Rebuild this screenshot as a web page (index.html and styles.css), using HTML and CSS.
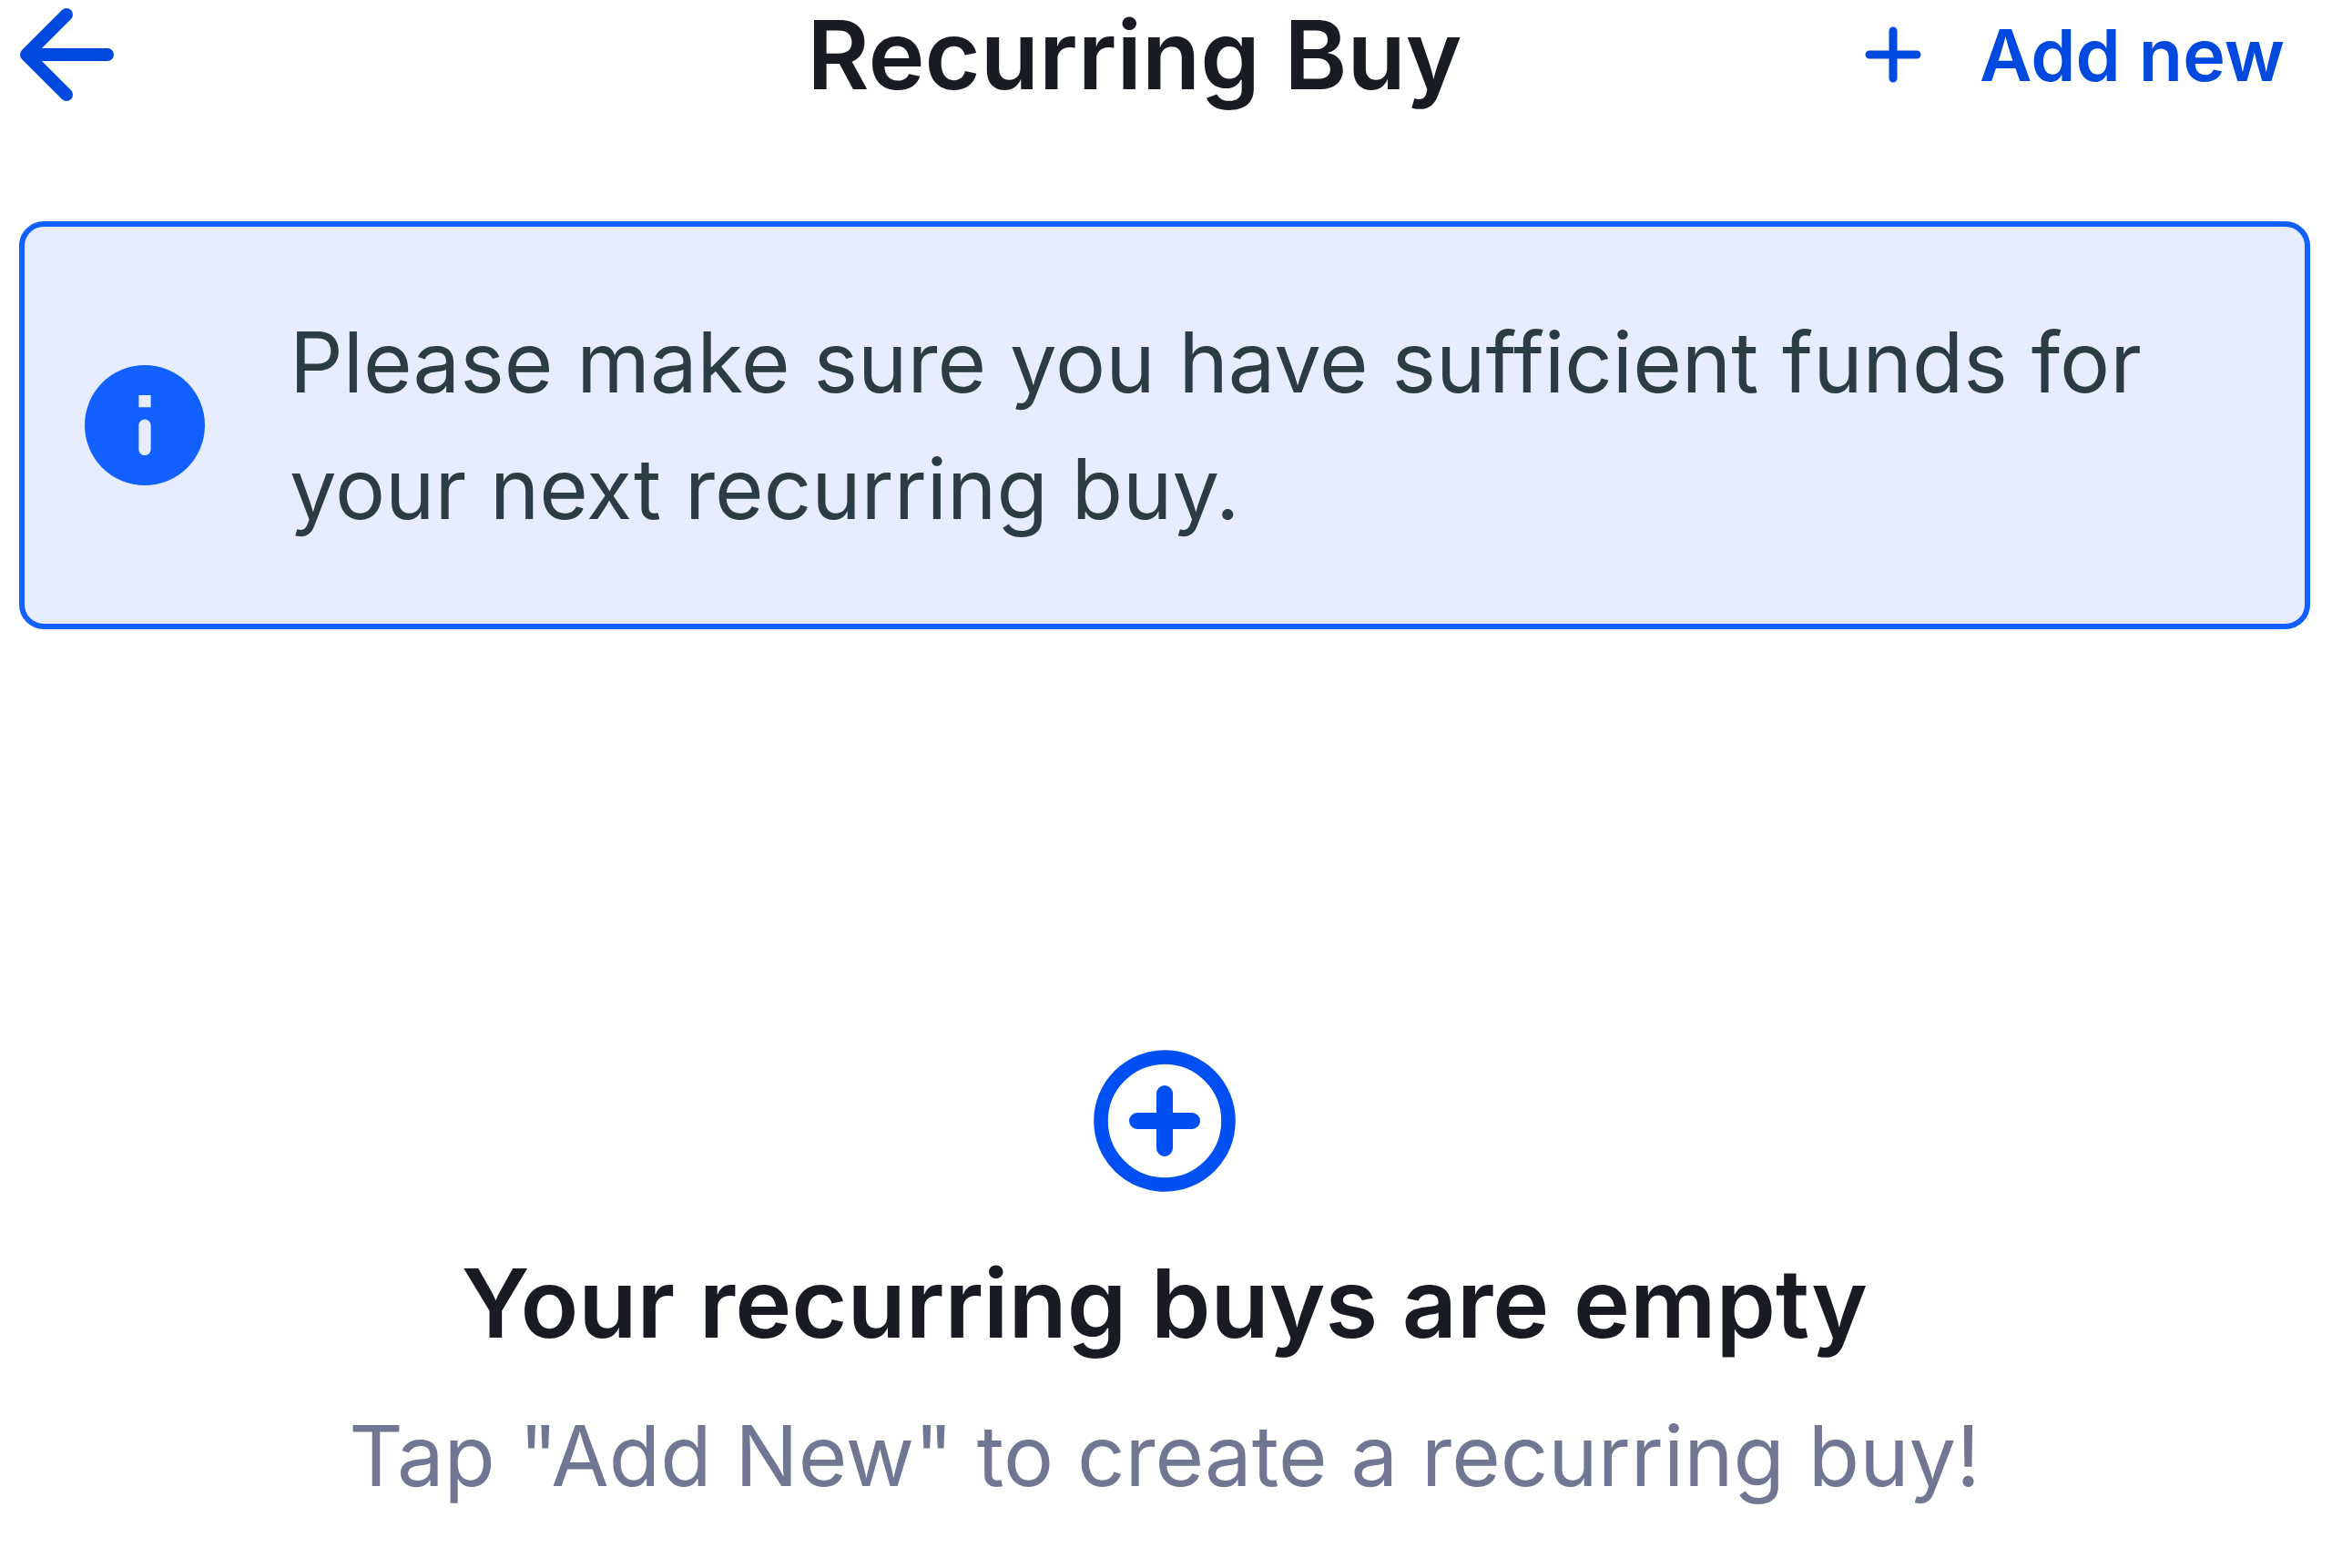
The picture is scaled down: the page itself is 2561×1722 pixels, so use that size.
FILE: index.html
```html
<!DOCTYPE html>
<html lang="en">
<head>
  <meta charset="UTF-8" />
  <meta name="viewport" content="width=device-width, initial-scale=1.0" />
  <title>Recurring Buy</title>
  <link rel="stylesheet" href="styles.css">
</head>
<body>
  <header class="topbar">
    <button class="back-btn" type="button" aria-label="Back">
      <svg class="back-icon" viewBox="0 0 104 102" fill="none" stroke="currentColor" stroke-width="14" stroke-linecap="round" stroke-linejoin="round">
        <path d="M52 7L8 51l44 44M9 51h88" />
      </svg>
    </button>
    <h1 class="title">Recurring Buy</h1>
    <button class="add-btn" type="button">
      <svg class="add-icon" viewBox="0 0 62 62" fill="none" stroke="currentColor" stroke-width="9" stroke-linecap="round">
        <path d="M31 5v52M5 31h52" />
      </svg>
      Add new
    </button>
  </header>

  <main>
    <section class="notice">
      <svg class="notice-icon" viewBox="2 2 20 20">
        <path fill="currentColor" fill-rule="evenodd" d="M12 2a10 10 0 1 0 0 20 10 10 0 0 0 0-20zm0 15c-.55 0-1-.45-1-1v-4c0-.55.45-1 1-1s1 .45 1 1v4c0 .55-.45 1-1 1zm1-8h-2V7h2v2z" />
      </svg>
      <p>Please make sure you have sufficient funds for your next recurring buy.</p>
    </section>

    <section class="empty">
      <svg class="empty-icon" viewBox="0 0 156 156" fill="none" stroke="currentColor">
        <circle cx="78" cy="78" r="70" stroke-width="15.6" />
        <path d="M78 48v60M48 78h60" stroke-width="18" stroke-linecap="round" />
      </svg>
      <h2 class="title">Your recurring buys are empty</h2>
      <p>Tap "Add New" to create a recurring buy!</p>
    </section>
  </main>
</body>
</html>
```

FILE: styles.css
```css
* {
  box-sizing: border-box;
}
body {
  font-family: Inter, "Liberation Sans", sans-serif;
  font-optical-sizing: none;
  margin: 0;
  padding: 0 24px 0 21px;
  background: #fff;
  color: #181b22;
}
h1, h2, p {
  margin: 0;
}
svg {
  display: block;
  flex-shrink: 0;
}
button {
  font-family: inherit;
  border: 0;
  padding: 0;
  background: none;
  color: #0049de;
  cursor: pointer;
}
.topbar {
  display: grid;
  grid-template-columns: 1fr auto 1fr;
  align-items: center;
  height: 120px;
}
.title {
  font-size: 105px;
  line-height: 160px;
  font-weight: 600;
}
.topbar .title {
  line-height: 120px;
  margin-right: 66px;
}
.back-btn {
  justify-self: start;
}
.back-icon {
  width: 104px;
  height: 102px;
}
.add-btn {
  justify-self: end;
  display: flex;
  align-items: center;
  gap: 64px;
  padding-right: 28px;
  font-size: 79px;
  line-height: 118px;
  font-weight: 600;
  white-space: nowrap;
}
.add-icon {
  width: 62px;
  height: 62px;
}
.notice {
  display: flex;
  align-items: center;
  gap: 93px;
  margin-top: 123px;
  padding: 79px 66px;
  border: 6px solid #1160ff;
  border-radius: 27px;
  background: #e7edff;
}
.notice-icon {
  width: 132px;
  height: 132px;
  color: #1160ff;
}
.notice p {
  font-size: 92px;
  line-height: 139px;
  color: #2a3d43;
}
.empty {
  display: flex;
  flex-direction: column;
  align-items: center;
  margin-top: 462px;
  text-align: center;
}
.empty-icon {
  width: 156px;
  height: 156px;
  color: #004ff2;
}
.empty .title {
  margin-top: 42px;
}
.empty p {
  margin-top: 18px;
  font-size: 92px;
  line-height: 139px;
  color: #707793;
}
```
